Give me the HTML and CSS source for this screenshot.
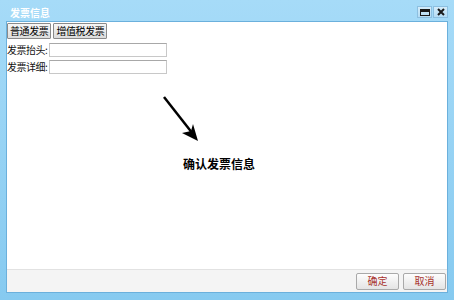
FILE: index.html
```html
<!DOCTYPE html>
<html lang="zh-CN">
<head>
    <meta charset="UTF-8">
    <title>发票信息</title>
    <link rel="stylesheet" href="styles.css">
</head>
<body>
    <div class="window">
        <div class="titlebar">
            <div class="title">发票信息</div>
            <div class="tools">
                <div class="tool">
                    <svg width="10" height="7" viewBox="0 0 10 7"><rect x="0.5" y="0.5" width="9" height="6" fill="none" stroke="#1a1a1a" stroke-width="1"/><rect x="1" y="1" width="8" height="2" fill="#1a1a1a"/></svg>
                </div>
                <div class="tool">
                    <svg width="8" height="8" viewBox="0 0 8 8"><path d="M1 1 L7 7 M7 1 L1 7" stroke="#1a1a1a" stroke-width="2"/></svg>
                </div>
            </div>
        </div>
        <div class="body">
            <div class="content">
                <div class="tabs">
                    <button class="btn">普通发票</button>
                    <button class="btn">增值税发票</button>
                </div>
                <div class="row">
                    <label>发票抬头:</label>
                    <input type="text" class="field">
                </div>
                <div class="row">
                    <label>发票详细:</label>
                    <input type="text" class="field">
                </div>
                <div class="hint">
                    <svg class="arrow" width="40" height="50" viewBox="0 0 40 50">
                        <path d="M2 2 L31 39" stroke="#000" stroke-width="2.5"/>
                        <path d="M36 46 L20 38 L29 36 L31 29 Z" fill="#000"/>
                    </svg>
                    <div class="confirm">确认发票信息</div>
                </div>
            </div>
            <div class="footer">
                <button class="btn red">确定</button>
                <button class="btn red">取消</button>
            </div>
        </div>
    </div>
</body>
</html>
```

FILE: styles.css
```css
html, body {
    margin: 0;
    padding: 0;
    background: #fff;
}

.window {
    width: 454px;
    height: 300px;
    box-sizing: border-box;
    background: linear-gradient(#a6dbf8, #86caf0);
    padding: 0 6px 7px 6px;
    display: flex;
    flex-direction: column;
    font-family: "Noto Sans CJK SC", "Liberation Sans", sans-serif;
    font-size: 10px;
}

.titlebar {
    height: 21px;
    box-sizing: border-box;
    padding-top: 3px;
    display: flex;
    align-items: center;
    justify-content: space-between;
}

.title {
    color: #fff;
    font-weight: bold;
    font-size: 10px;
    padding-left: 4px;
}

.tools {
    display: flex;
    gap: 1px;
}

.tool {
    width: 13px;
    height: 10px;
    border: 1px solid #8cbfe0;
    background: linear-gradient(#d4ecfa, #b4dcf4);
    display: flex;
    align-items: center;
    justify-content: center;
}

.body {
    flex: 1;
    display: flex;
    flex-direction: column;
    background: #fff;
    border: 1px solid #6bb0dc;
}

.content {
    flex: 1;
    padding: 1px 1px 1px 0;
}

.tabs {
    display: flex;
    gap: 2px;
    margin-bottom: 2px;
}

.btn {
    font-family: "Noto Sans CJK SC", sans-serif;
    font-size: 10px;
    letter-spacing: -0.4px;
    line-height: 12px;
    padding: 0 2px;
    height: 16px;
    border: 1px solid #8a8a8a;
    background: linear-gradient(#f6f6f6, #dcdcdc);
    color: #000;
    border-radius: 1px;
}

.row {
    display: flex;
    align-items: center;
    height: 17px;
}

.row label {
    width: 42px;
    flex-shrink: 0;
    white-space: nowrap;
    letter-spacing: -0.5px;
    color: #111;
}

.field {
    width: 114px;
    height: 12px;
    padding: 0 1px;
    border: 1px solid #c8c8c8;
    border-top-color: #a8a8a8;
    margin: 0;
}

.hint {
    position: relative;
    height: 120px;
}

.arrow {
    position: absolute;
    left: 155px;
    top: 20px;
}

.confirm {
    position: absolute;
    left: 176px;
    top: 80px;
    font-weight: bold;
    font-size: 12px;
}

.footer {
    height: 22px;
    background: #f4f4f4;
    border-top: 1px solid #e2e2e2;
    display: flex;
    justify-content: flex-end;
    align-items: center;
    gap: 4px;
    padding-right: 1px;
}

.btn.red {
    color: #a8322b;
    letter-spacing: 0;
    width: 43px;
    height: 17px;
    border: 1px solid #a9a9a9;
    border-radius: 2px;
    background: linear-gradient(#fdfdfd, #e4e4e4);
}
```
